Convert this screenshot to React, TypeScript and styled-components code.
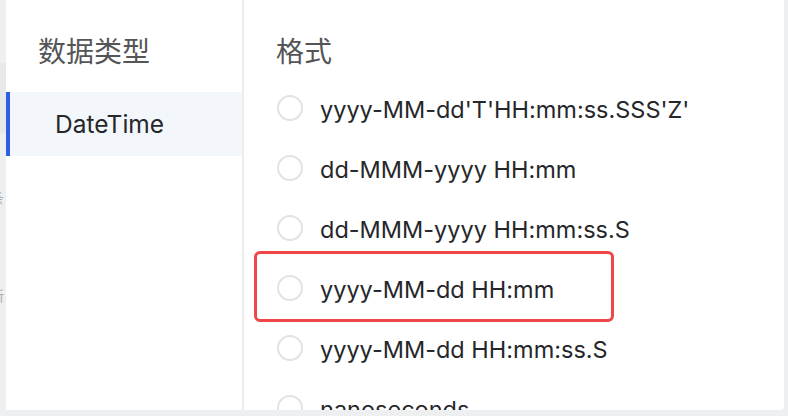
import React from "react";
import styled, { createGlobalStyle } from "styled-components";

const Global = createGlobalStyle`
  html, body { margin: 0; padding: 0; background: #eeeff1; }
  body { font-family: Inter, "Noto Sans CJK SC", sans-serif; }
`;

const Screen = styled.div`
  display: flex;
  width: 788px;
  height: 416px;
  overflow: hidden;
  background: #eeeff1;
`;

const Backdrop = styled.div`
  width: 6px;
  flex: none;
  overflow: hidden;
  display: flex;
  flex-direction: column;
  font-family: "Noto Sans CJK SC", sans-serif;
  font-size: 14px;
  color: #8a8c90;
`;

const BackdropShade = styled.div`
  height: 70px;
  flex: none;
  margin-top: 63px;
  background: #e7e8ea;
`;

const BackdropText = styled.div<{ $top: number }>`
  margin-top: ${(p) => p.$top}px;
  margin-left: -10px;
  line-height: 18px;
  flex: none;
  opacity: 0.7;
`;

const Panel = styled.div`
  width: 778px;
  height: 410px;
  flex: none;
  display: flex;
  overflow: hidden;
  background: #ffffff;
  border-bottom-right-radius: 4px;
`;

const Side = styled.div`
  width: 236px;
  flex: none;
  border-right: 2px solid #ededef;
  display: flex;
  flex-direction: column;
`;

const Main = styled.div`
  flex: 1;
  display: flex;
  flex-direction: column;
  overflow: hidden;
`;

const Heading = styled.div<{ $left: number; $after: number }>`
  flex: none;
  margin: 33px 0 ${(p) => p.$after}px ${(p) => p.$left}px;
  height: 34px;
  line-height: 34px;
  font-family: "Noto Sans CJK SC", sans-serif;
  font-size: 28px;
  color: #545557;
`;

const TypeItem = styled.div<{ $active?: boolean }>`
  flex: none;
  height: 64px;
  display: flex;
  align-items: center;
  padding-left: 45px;
  border-left: 4px solid ${(p) => (p.$active ? "#2d5fe3" : "transparent")};
  background: ${(p) => (p.$active ? "#f3f7fc" : "transparent")};
  font-size: 24.5px;
  color: #26272a;
`;

const Option = styled.div`
  position: relative;
  flex: none;
  height: 60px;
  display: flex;
  align-items: center;
  gap: 17px;
  padding-left: 33px;
  font-size: 23.5px;
  color: #26272a;
  white-space: nowrap;
`;

const Radio = styled.span`
  width: 26px;
  height: 26px;
  box-sizing: border-box;
  border: 2px solid #e1e2e7;
  border-radius: 50%;
  flex: none;
  margin-top: -2px;
`;

const Highlight = styled.div`
  position: absolute;
  left: 10px;
  top: -8px;
  width: 360px;
  height: 71px;
  box-sizing: border-box;
  border: 3px solid #ef4747;
  border-radius: 6px;
  pointer-events: none;
`;

const formats = [
  "yyyy-MM-dd'T'HH:mm:ss.SSS'Z'",
  "dd-MMM-yyyy HH:mm",
  "dd-MMM-yyyy HH:mm:ss.S",
  "yyyy-MM-dd HH:mm",
  "yyyy-MM-dd HH:mm:ss.S",
  "nanoseconds",
];

export default function App() {
  return (
    <>
      <Global />
      <Screen>
        <Backdrop>
          <BackdropShade />
          <BackdropText $top={55}>条</BackdropText>
          <BackdropText $top={80}>新</BackdropText>
        </Backdrop>
        <Panel>
          <Side>
            <Heading $left={32} $after={25}>数据类型</Heading>
            <TypeItem $active>DateTime</TypeItem>
          </Side>
          <Main>
            <Heading $left={32} $after={12}>格式</Heading>
            {formats.map((f, i) => (
              <Option key={f}>
                <Radio />
                <span>{f}</span>
                {i === 3 && <Highlight />}
              </Option>
            ))}
          </Main>
        </Panel>
      </Screen>
    </>
  );
}
